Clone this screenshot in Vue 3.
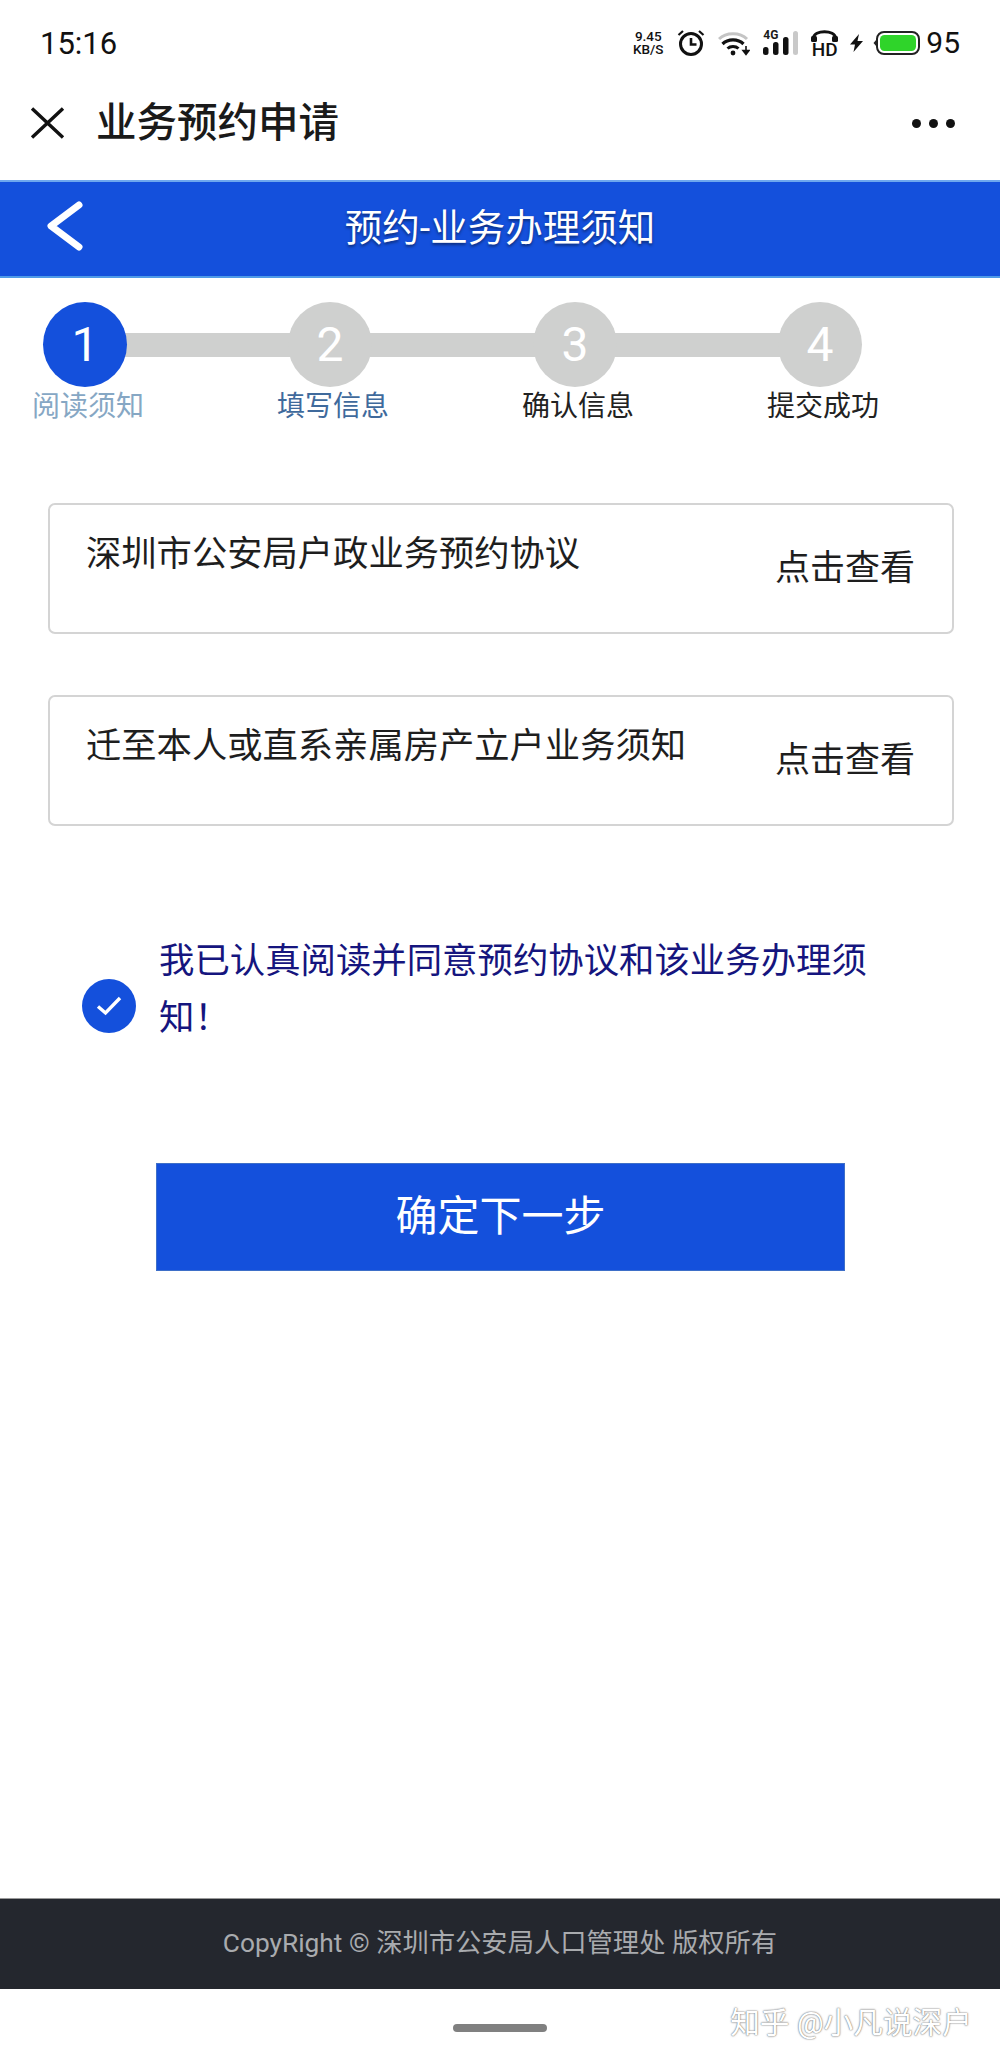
<script setup>
const steps = [
  { no: 1, label: '阅读须知', tone: 'done' },
  { no: 2, label: '填写信息', tone: 'next' },
  { no: 3, label: '确认信息', tone: '' },
  { no: 4, label: '提交成功', tone: '' }
]

const notices = [
  '深圳市公安局户政业务预约协议',
  '迁至本人或直系亲属房产立户业务须知'
]
</script>

<template>
  <div class="page">
    <div class="status-bar">
      <span class="time">15:16</span>
      <div class="status-icons">
        <div class="speed"><span>9.45</span><span>KB/S</span></div>
        <svg class="ic-alarm" width="28" height="28" viewBox="0 0 28 28" fill="none" stroke="#111">
          <circle cx="14" cy="15" r="10.5" stroke-width="3" />
          <path d="M14 9v6.5h5.5" stroke-width="2.6" />
          <path d="M1.5 6 6 2M26.5 6 22 2" stroke-width="2.2" />
        </svg>
        <svg class="ic-wifi" width="32" height="25" viewBox="0 0 32 25" fill="none">
          <path d="M1 8C8 1 22 1 29 8" stroke="#c4c4c4" stroke-width="3" />
          <path d="M4.5 13C10 7.5 20 7.5 25.5 13" stroke="#111" stroke-width="3.2" />
          <path d="M9.5 17.5C12.5 14.8 17.5 14.8 20.5 17.5" stroke="#111" stroke-width="3" />
          <circle cx="15" cy="22" r="2.4" fill="#111" />
          <path d="M28 15v5M25 19.5h6L28 23.5z" stroke="#111" stroke-width="1.6" fill="#111" />
        </svg>
        <div class="signal">
          <span class="net">4G</span>
          <svg width="35" height="25" viewBox="0 0 35 25">
            <rect x="0" y="16" width="5.5" height="8" rx="2.5" fill="#111" />
            <rect x="10" y="11" width="5.5" height="13" rx="2.5" fill="#111" />
            <rect x="20" y="6" width="5.5" height="18" rx="2.5" fill="#111" />
            <rect x="30" y="0" width="5" height="24" rx="2.5" fill="#c9c9c9" />
          </svg>
        </div>
        <div class="hd">
          <svg width="27" height="12" viewBox="0 0 27 12" fill="none">
            <path d="M2.5 11V8C2.5 -0.5 24.5 -0.5 24.5 8V11" stroke="#111" stroke-width="3" />
            <rect x="0" y="6" width="6" height="6" rx="1.5" fill="#111" />
            <rect x="21" y="6" width="6" height="6" rx="1.5" fill="#111" />
          </svg>
          <span>HD</span>
        </div>
        <svg class="ic-bolt" width="15" height="18" viewBox="0 0 15 18">
          <path d="M10 0 1 10.5h5L4.5 18 14 7H8.5z" fill="#111" />
        </svg>
        <svg class="ic-battery" width="47" height="24" viewBox="0 0 47 24">
          <path d="M3.5 8.5 0.5 12l3 3.5z" fill="#222" />
          <rect x="4" y="1" width="42" height="22" rx="7" fill="none" stroke="#222" stroke-width="2" />
          <rect x="7" y="4" width="36" height="16" rx="4.5" fill="#2fd42a" />
        </svg>
        <span class="level">95</span>
      </div>
    </div>

    <div class="nav-bar">
      <svg class="nav-close" width="36" height="32" viewBox="0 0 36 32" fill="none" stroke="#111" stroke-width="3.4">
        <path d="M2 1.5 33 30.5M33 1.5 2 30.5" />
      </svg>
      <span class="nav-title">业务预约申请</span>
      <div class="nav-more"><i></i><i></i><i></i></div>
    </div>

    <div class="head-bar">
      <svg class="back" width="38" height="50" viewBox="0 0 38 50" fill="none" stroke="#fff" stroke-width="7" stroke-linecap="round" stroke-linejoin="round">
        <path d="M33 4 5 25l28 21" />
      </svg>
      <span class="head-title">预约-业务办理须知</span>
    </div>

    <div class="steps">
      <div v-for="s in steps" :key="s.no" class="step">
        <div class="step-track">
          <div class="dot" :class="{ active: s.no === 1 }">{{ s.no }}</div>
          <div v-if="s.no < 4" class="link"></div>
        </div>
        <div class="step-label" :class="s.tone">{{ s.label }}</div>
      </div>
    </div>

    <div class="notices">
      <div v-for="n in notices" :key="n" class="notice">
        <span class="notice-text">{{ n }}</span>
        <span class="notice-link">点击查看</span>
      </div>
    </div>

    <div class="agree">
      <div class="tick">
        <svg width="30" height="24" viewBox="0 0 30 24" fill="none" stroke="#fff" stroke-width="3.4">
          <path d="M4 12.5 11.5 19 26 4" />
        </svg>
      </div>
      <div class="agree-text">我已认真阅读并同意预约协议和该业务办理须知&#xFF01;</div>
    </div>

    <div class="submit">确定下一步</div>

    <div class="grow"></div>

    <div class="footer">CopyRight © 深圳市公安局人口管理处 版权所有</div>
    <div class="home"><div class="home-pill"></div></div>
    <div class="watermark">知乎 @小凡说深户</div>
  </div>
</template>

<style scoped>
.page {
  position: relative;
  display: flex;
  flex-direction: column;
  width: 1000px;
  height: 2066px;
  overflow: hidden;
  background: #fff;
  color: #1a1a1a;
  font-family: Roboto, "Noto Sans CJK SC", sans-serif;
}

.status-bar {
  display: flex;
  justify-content: space-between;
  align-items: center;
  height: 86px;
  padding: 0 40px;
}

.time {
  font-size: 31px;
  color: #111;
}

.status-icons {
  display: flex;
  align-items: center;
}

.speed {
  display: flex;
  flex-direction: column;
  align-items: center;
  width: 32px;
  font-size: 13.5px;
  line-height: 13px;
  font-weight: 500;
  color: #111;
}

.ic-alarm {
  margin-left: 13px;
}

.ic-wifi {
  margin-left: 13px;
}

.signal {
  position: relative;
  margin-left: 13px;
  height: 25px;
}

.signal svg {
  display: block;
}

.net {
  position: absolute;
  left: 0;
  top: -3px;
  font-size: 12px;
  line-height: 14px;
  font-weight: 700;
}

.hd {
  display: flex;
  flex-direction: column;
  align-items: center;
  margin-left: 13px;
  width: 27px;
  font-size: 19px;
  line-height: 15px;
  font-weight: 500;
  color: #111;
}

.ic-bolt {
  margin-left: 11px;
}

.ic-battery {
  margin-left: 9px;
}

.level {
  margin-left: 6px;
  font-size: 30px;
  line-height: 30px;
  color: #111;
}

.nav-bar {
  display: flex;
  align-items: center;
  height: 94px;
  box-sizing: border-box;
  padding: 0 45px 20px 30px;
}

.nav-title {
  margin-left: 30px;
  font-size: 40.5px;
  font-weight: 500;
  line-height: 56px;
  color: #1a1a1a;
}

.nav-more {
  display: flex;
  gap: 8px;
  margin-left: auto;
}

.nav-more i {
  width: 9px;
  height: 9px;
  border-radius: 50%;
  background: #111;
}

.head-bar {
  position: relative;
  display: flex;
  justify-content: center;
  align-items: center;
  height: 98px;
  box-sizing: border-box;
  padding-bottom: 3px;
  background: #1450dc;
  border-top: 2px solid #6fa8ee;
  border-bottom: 2px solid #4f9be8;
}

.back {
  position: absolute;
  left: 46px;
  top: 19px;
}

.head-title {
  font-size: 37.5px;
  line-height: 48px;
  color: #fff;
  text-shadow: 0 2px 3px rgba(0, 0, 0, 0.45);
}

.steps {
  display: flex;
  margin-top: 24px;
  padding-left: 43px;
}

.step {
  flex: none;
  width: 245px;
}

.step-track {
  display: flex;
  align-items: center;
}

.dot {
  display: flex;
  flex: none;
  justify-content: center;
  align-items: center;
  z-index: 1;
  width: 84px;
  height: 85px;
  border-radius: 50%;
  background: #cfd0cf;
  font-size: 48px;
  color: #fff;
}

.dot.active {
  background: #1450dc;
}

.link {
  flex: 1;
  height: 24px;
  margin: 0 -3px;
  background: #cfd0cf;
}

.step-label {
  margin-left: -11px;
  font-size: 28px;
  line-height: 40px;
  color: #222;
  white-space: nowrap;
}

.step-label.done {
  color: #86a7c4;
}

.step-label.next {
  color: #3f6a9c;
}

.notices {
  display: flex;
  flex-direction: column;
  gap: 61px;
  margin-top: 76px;
  padding: 0 46px 0 48px;
}

.notice {
  display: flex;
  justify-content: space-between;
  align-items: flex-start;
  height: 131px;
  box-sizing: border-box;
  padding: 0 37px 0 36px;
  border: 2px solid #d4d4d4;
  border-radius: 7px;
}

.notice-text {
  margin-top: 24px;
  font-size: 35.3px;
  line-height: 50px;
  color: #1e1e1e;
}

.notice-link {
  margin-top: 39px;
  font-size: 35px;
  line-height: 50px;
  color: #1e1e1e;
}

.agree {
  display: flex;
  align-items: flex-start;
  margin-top: 107px;
  padding-left: 82px;
}

.tick {
  display: flex;
  flex: none;
  justify-content: center;
  align-items: center;
  width: 54px;
  height: 54px;
  margin-top: 46px;
  border-radius: 50%;
  background: #1450dc;
}

.agree-text {
  width: 725px;
  margin-left: 23px;
  font-size: 35.4px;
  line-height: 57px;
  color: #15157e;
}

.submit {
  display: flex;
  justify-content: center;
  align-items: center;
  width: 689px;
  height: 108px;
  box-sizing: border-box;
  margin: 116px 0 0 156px;
  padding-bottom: 10px;
  background: #1450dc;
  box-shadow: 0 0 0 1px #3e6fc8 inset;
  font-size: 42px;
  color: #fff;
}

.grow {
  flex: 1;
}

.footer {
  display: flex;
  justify-content: center;
  align-items: center;
  height: 91px;
  padding-bottom: 7px;
  background: #24272e;
  border-top: 1px solid #9a9a9a;
  box-sizing: border-box;
  font-size: 26.3px;
  color: #a9abae;
}

.home {
  display: flex;
  justify-content: center;
  align-items: center;
  height: 77px;
}

.home-pill {
  width: 94px;
  height: 8px;
  border-radius: 4px;
  background: #808080;
}

.watermark {
  position: absolute;
  right: 28px;
  top: 2001px;
  font-size: 29.7px;
  line-height: 44px;
  color: #fff;
  text-shadow: 0 0 2px #777, 0 0 1px #777;
  white-space: nowrap;
}
</style>
